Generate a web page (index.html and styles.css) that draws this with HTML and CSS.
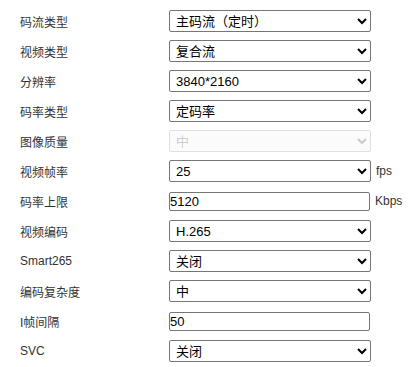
FILE: index.html
```html
<!DOCTYPE html>
<html>
<head>
<meta charset="utf-8">
<link rel="stylesheet" href="styles.css">
</head>
<body>
 <form class="video-form">
   <div class="row">
     <label class="label">码流类型</label>
     <select class="field"><option>主码流（定时）</option><option>子码流</option></select>
   </div>
   <div class="row">
     <label class="label">视频类型</label>
     <select class="field"><option>复合流</option><option>视频流</option></select>
   </div>
   <div class="row">
     <label class="label">分辨率</label>
     <select class="field"><option>3840*2160</option><option>1920*1080</option></select>
   </div>
   <div class="row">
     <label class="label">码率类型</label>
     <select class="field"><option>定码率</option><option>变码率</option></select>
   </div>
   <div class="row">
     <label class="label">图像质量</label>
     <select class="field" disabled><option>中</option></select>
   </div>
   <div class="row">
     <label class="label">视频帧率</label>
     <select class="field"><option>25</option><option>30</option></select>
     <span class="unit">fps</span>
   </div>
   <div class="row">
     <label class="label">码率上限</label>
     <input class="field text" type="text" value="5120">
     <span class="unit">Kbps</span>
   </div>
   <div class="row">
     <label class="label">视频编码</label>
     <select class="field"><option>H.265</option><option>H.264</option></select>
   </div>
   <div class="row">
     <label class="label">Smart265</label>
     <select class="field"><option>关闭</option><option>开启</option></select>
   </div>
   <div class="row">
     <label class="label">编码复杂度</label>
     <select class="field"><option>中</option><option>高</option><option>低</option></select>
   </div>
   <div class="row">
     <label class="label">I帧间隔</label>
     <input class="field text" type="text" value="50">
   </div>
   <div class="row">
     <label class="label">SVC</label>
     <select class="field"><option>关闭</option><option>开启</option></select>
   </div>
 </form>
</body>
</html>
```

FILE: styles.css
```css
/* Base */
body {
 margin: 0;
 padding: 6px 0 0 20px;
 background: #fff;
 font-family: "Liberation Sans", Arial, "Noto Sans CJK SC", sans-serif;
 color: #333;
}

.video-form {
 margin: 0;
}

/* Rows */
.row {
 display: flex;
 align-items: center;
 height: 30px;
}

.label {
 width: 149px;
 flex: none;
 font-size: 12px;
 color: #333;
}

.field {
 width: 202px;
 height: 22px;
 box-sizing: border-box;
 margin: 0;
 padding-left: 2px;
 font-family: "Liberation Sans", Arial, "Noto Sans CJK SC", sans-serif;
 font-size: 13px;
 color: #000;
 border: 1px solid #767676;
 border-radius: 2px;
 background-color: #fff;
}

.field.text {
 height: 19px;
 padding: 0;
 width: 201px;
}

.field:disabled {
 color: rgba(16,16,16,0.3);
 border-color: rgba(118,118,118,0.3);
 background-color: rgba(239,239,239,0.3);
}

.unit {
 margin-left: 5px;
 font-size: 12px;
 color: #333;
}
```
